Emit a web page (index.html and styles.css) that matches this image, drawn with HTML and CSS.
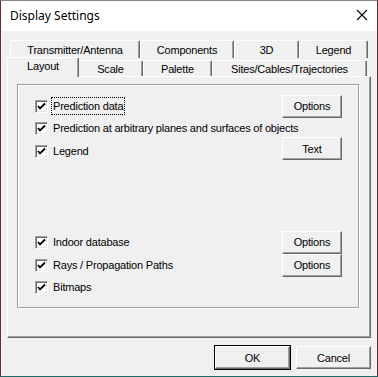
FILE: index.html
```html
<!DOCTYPE html>
<html lang="en">
<head>
    <meta charset="UTF-8">
    <title>Display Settings</title>
    <link rel="stylesheet" href="styles.css">
</head>
<body>
    <div class="window">
        <div class="titlebar">
            <span class="title">Display Settings</span>
            <svg class="close" width="12" height="12" viewBox="0 0 12 12">
                <path d="M1 1 L11 11 M11 1 L1 11" stroke="#000" stroke-width="1.1" fill="none"/>
            </svg>
        </div>
        <div class="content">
            <div class="tabrow back">
                <div class="tab w130">Transmitter/Antenna</div>
                <div class="tab w94">Components</div>
                <div class="tab w65">3D</div>
                <div class="tab w69">Legend</div>
            </div>
            <div class="tabrow front">
                <div class="tab sel w71">Layout</div>
                <div class="tab w65">Scale</div>
                <div class="tab w69">Palette</div>
                <div class="tab w155">Sites/Cables/Trajectories</div>
            </div>
            <div class="panel">
                <div class="group">
                    <div class="row">
                        <span class="check"><svg width="9" height="9" viewBox="0 0 9 9"><path d="M1 4 L3 6.5 L8 1.5" stroke="#000" stroke-width="1.8" fill="none"/></svg></span>
                        <span class="label focus">Prediction data</span>
                        <button class="btn">Options</button>
                    </div>
                    <div class="row">
                        <span class="check"><svg width="9" height="9" viewBox="0 0 9 9"><path d="M1 4 L3 6.5 L8 1.5" stroke="#000" stroke-width="1.8" fill="none"/></svg></span>
                        <span class="label">Prediction at arbitrary planes and surfaces of objects</span>
                    </div>
                    <div class="row gap1">
                        <span class="check"><svg width="9" height="9" viewBox="0 0 9 9"><path d="M1 4 L3 6.5 L8 1.5" stroke="#000" stroke-width="1.8" fill="none"/></svg></span>
                        <span class="label">Legend</span>
                        <button class="btn up">Text</button>
                    </div>
                    <div class="spacer"></div>
                    <div class="row">
                        <span class="check"><svg width="9" height="9" viewBox="0 0 9 9"><path d="M1 4 L3 6.5 L8 1.5" stroke="#000" stroke-width="1.8" fill="none"/></svg></span>
                        <span class="label">Indoor database</span>
                        <button class="btn">Options</button>
                    </div>
                    <div class="row gap1">
                        <span class="check"><svg width="9" height="9" viewBox="0 0 9 9"><path d="M1 4 L3 6.5 L8 1.5" stroke="#000" stroke-width="1.8" fill="none"/></svg></span>
                        <span class="label">Rays / Propagation Paths</span>
                        <button class="btn">Options</button>
                    </div>
                    <div class="row">
                        <span class="check"><svg width="9" height="9" viewBox="0 0 9 9"><path d="M1 4 L3 6.5 L8 1.5" stroke="#000" stroke-width="1.8" fill="none"/></svg></span>
                        <span class="label">Bitmaps</span>
                    </div>
                </div>
            </div>
            <div class="footer">
                <button class="btn ok">OK</button>
                <button class="btn cancel">Cancel</button>
            </div>
        </div>
    </div>
</body>
</html>
```
FILE: styles.css
```css
body{
    margin: 0;
    background-color: #2b6f6a;
    font-family: "Liberation Sans", Arial, sans-serif;
    font-size: 11px;
    letter-spacing: -0.2px;
    color: black;
}
.window{
    width: 376px;
    height: 375px;
    border: 1px solid #7a2626;
    border-top-color: #8a8a8a;
    border-right-color: #6d2a2a;
    border-bottom-color: #1f6b66;
    background-color: #f0f0f0;
    display: flex;
    flex-direction: column;
}
.titlebar{
    height: 30px;
    background-color: white;
    display: flex;
    align-items: center;
    justify-content: space-between;
    padding: 0 9px 0 9px;
}
.title{
    font-family: "Noto Sans", sans-serif;
    font-size: 12px;
    letter-spacing: 0;
    margin-top: -1px;
}
.close{
    margin-top: -3px;
}
.content{
    padding: 9px 0 0 6px;
}
.tabrow{
    display: flex;
    height: 18px;
}
.tabrow.back{
    padding-left: 3px;
}
.tab{
    box-sizing: border-box;
    height: 18px;
    border-top: 1px solid white;
    border-left: 1px solid white;
    border-right: 1px solid #696969;
    box-shadow: inset -1px 0 #a0a0a0;
    border-radius: 2px 2px 0 0;
    text-align: center;
    line-height: 17px;
    padding-top: 1px;
}
.tabrow.front .tab{
    margin-top: 2px;
    height: 16px;
    line-height: 16px;
    padding-top: 0;
    position: relative;
    z-index: 1;
}
.tabrow.front .tab.sel{
    margin-top: -1px;
    height: 20px;
    line-height: 16px;
    background-color: #f0f0f0;
    z-index: 2;
    margin-right: -1px;
}
.w130{ width: 130px; }
.w94{ width: 94px; }
.w65{ width: 65px; }
.w69{ width: 69px; }
.w71{ width: 72px; }
.w155{ width: 155px; }
.panel{
    box-sizing: border-box;
    width: 364px;
    height: 262px;
    border-top: 1px solid white;
    border-left: 1px solid white;
    border-right: 1px solid #696969;
    border-bottom: 1px solid #696969;
    box-shadow: inset -1px -1px #a0a0a0;
    padding: 7px 0 0 9px;
}
.group{
    box-sizing: border-box;
    width: 342px;
    height: 224px;
    border: 1px solid #a0a0a0;
    box-shadow: inset 1px 1px white, 1px 1px white;
    padding: 10px 0 0 17px;
    display: flex;
    flex-direction: column;
}
.row{
    height: 22px;
    display: flex;
    align-items: center;
    flex-shrink: 0;
}
.row.gap1{
    margin-top: 1px;
}
.check{
    box-sizing: border-box;
    width: 13px;
    height: 13px;
    background-color: white;
    border-top: 1px solid #a0a0a0;
    border-left: 1px solid #a0a0a0;
    border-right: 1px solid white;
    border-bottom: 1px solid white;
    box-shadow: inset 1px 1px #696969, inset -1px -1px #e3e3e3;
    display: flex;
    align-items: center;
    justify-content: center;
    margin-right: 4px;
}
.label{
    padding: 2px 1px;
}
.focus{
    outline: 1px dotted black;
}
.btn{
    box-sizing: border-box;
    width: 60px;
    height: 23px;
    margin-left: auto;
    margin-right: 16px;
    font-family: "Liberation Sans", Arial, sans-serif;
    font-size: 11px;
    letter-spacing: -0.2px;
    color: black;
    background-color: #f0f0f0;
    border-top: 1px solid white;
    border-left: 1px solid white;
    border-right: 1px solid #696969;
    border-bottom: 1px solid #696969;
    box-shadow: inset -1px -1px #a0a0a0;
    padding: 0;
}
.btn.up{
    align-self: flex-start;
    margin-top: -3px;
}
.spacer{
    height: 69px;
    flex-shrink: 0;
}
.footer{
    display: flex;
    justify-content: flex-end;
    gap: 6px;
    padding: 8px 6px 0 0;
}
.footer .btn{
    margin: 0;
    width: 75px;
    height: 23px;
}
.ok{
    outline: 1px solid #000;
    outline-offset: 0;
}
```
